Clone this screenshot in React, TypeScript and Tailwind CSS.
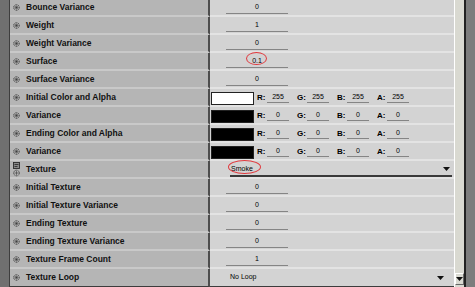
import React from "react";

type Row = {
  label: string;
  kind: "num" | "color" | "select";
  value?: string;
  swatch?: string;
  rgba?: string[];
  mark?: boolean;
  texIcon?: boolean;
};

const rows: Row[] = [
  { label: "Bounce Variance", kind: "num", value: "0" },
  { label: "Weight", kind: "num", value: "1" },
  { label: "Weight Variance", kind: "num", value: "0" },
  { label: "Surface", kind: "num", value: "0.1", mark: true },
  { label: "Surface Variance", kind: "num", value: "0" },
  { label: "Initial Color and Alpha", kind: "color", swatch: "bg-white", rgba: ["255", "255", "255", "255"] },
  { label: "Variance", kind: "color", swatch: "bg-black", rgba: ["0", "0", "0", "0"] },
  { label: "Ending Color and Alpha", kind: "color", swatch: "bg-black", rgba: ["0", "0", "0", "0"] },
  { label: "Variance", kind: "color", swatch: "bg-black", rgba: ["0", "0", "0", "0"] },
  { label: "Texture", kind: "select", value: "Smoke", mark: true, texIcon: true },
  { label: "Initial Texture", kind: "num", value: "0" },
  { label: "Initial Texture Variance", kind: "num", value: "0" },
  { label: "Ending Texture", kind: "num", value: "0" },
  { label: "Ending Texture Variance", kind: "num", value: "0" },
  { label: "Texture Frame Count", kind: "num", value: "1" },
  { label: "Texture Loop", kind: "select", value: "No Loop" },
];

function Gear() {
  return (
    <svg width="7" height="7" viewBox="0 0 7 7" className="shrink-0">
      <circle cx="3.5" cy="3.5" r="2.8" fill="none" stroke="#3a3a3a" strokeWidth="0.9" strokeDasharray="1.2 0.6" />
      <path d="M3.5 1.6v3.8M1.6 3.5h3.8M2.2 2.2l2.6 2.6M4.8 2.2l-2.6 2.6" stroke="#3a3a3a" strokeWidth="0.6" />
    </svg>
  );
}

function TexIcon() {
  return (
    <svg width="7" height="15" viewBox="0 0 7 15" className="shrink-0">
      <rect x="0.5" y="0.5" width="6" height="6" fill="#888" stroke="#2a2a2a" strokeWidth="0.9" />
      <path d="M1.5 2.5h4M1.5 4.5h3" stroke="#222" strokeWidth="0.8" />
      <circle cx="3.5" cy="11" r="2.8" fill="none" stroke="#3a3a3a" strokeWidth="0.9" strokeDasharray="1.2 0.6" />
      <path d="M3.5 9.1v3.8M1.6 11h3.8" stroke="#3a3a3a" strokeWidth="0.6" />
    </svg>
  );
}

function Arrow() {
  return (
    <svg width="7" height="4" viewBox="0 0 7 4">
      <path d="M0 0h7L3.5 4z" fill="#111" />
    </svg>
  );
}

function NumField({ value, mark }: { value: string; mark?: boolean }) {
  return (
    <div className="ml-[16px] mt-[2px] flex h-[13px] w-[62px] items-center justify-center border-b border-[#858585]">
      <span className="relative">
        {value}
        {mark && (
          <span className="absolute left-[-6px] top-[-4px] h-[13px] w-[21px] rounded-[50%] border border-[#e0393e]" />
        )}
      </span>
    </div>
  );
}

function ColorValue({ swatch, rgba }: { swatch: string; rgba: string[] }) {
  const keys = ["R:", "G:", "B:", "A:"];
  return (
    <div className="ml-px mt-[3px] flex items-start">
      <div className={`h-[13px] w-[43px] border border-[#222] ${swatch}`} />
      <div className="ml-[3px] flex gap-[8px]">
        {keys.map((k, i) => (
          <div key={k} className="flex items-start">
            <span className="w-[10px] text-[8px] font-bold leading-[11px]">{k}</span>
            <span className="flex h-[11px] w-[22px] items-center justify-center border-b border-[#858585] leading-[10px]">
              {rgba[i]}
            </span>
          </div>
        ))}
      </div>
    </div>
  );
}

export default function App() {
  return (
    <div
      className="flex h-[287px] w-[475px] overflow-hidden bg-[#7b7b7b] text-[#111]"
      style={{ fontFamily: '"Liberation Sans", Arial, sans-serif' }}
    >
      <div className="w-[10px] shrink-0 border-r border-[#3e3e3e] bg-[#707070]" />

      <div className="-mt-px flex w-[444px] shrink-0 flex-col">
        {rows.map((r, i) => {
          const last = i === rows.length - 1;
          return (
            <div key={i} className="flex h-[18px] shrink-0">
              <div
                className={`flex w-[200px] shrink-0 items-center gap-[6px] border-r-2 border-r-[#4d4d4d] bg-[#b5b5b5] pl-[3px] ${
                  last ? "border-b border-b-[#3c3c3c]" : "border-b-2 border-b-[#c9c9c9]"
                }`}
              >
                {r.texIcon ? <TexIcon /> : <Gear />}
                <span className="text-[8.5px] font-bold leading-none">{r.label}</span>
              </div>
              <div
                className={`flex-1 bg-[#d3d3d3] text-[7px] text-black ${
                  last ? "border-b border-b-[#3c3c3c]" : "border-b-2 border-b-[#e3e3e3]"
                }`}
              >
                {r.kind === "num" && <NumField value={r.value!} mark={r.mark} />}
                {r.kind === "color" && <ColorValue swatch={r.swatch!} rgba={r.rgba!} />}
                {r.kind === "select" && !last && (
                  <div className="ml-[20px] mt-[2px] flex h-[14px] w-[222px] items-center justify-between border-b-2 border-[#3a3a3a] pl-px pr-[2px]">
                    <span className="relative">
                      {r.value}
                      {r.mark && (
                        <span className="absolute left-[-3px] top-[-4px] h-[14px] w-[33px] rounded-[50%] border border-[#e0393e]" />
                      )}
                    </span>
                    <Arrow />
                  </div>
                )}
                {r.kind === "select" && last && (
                  <div className="ml-[20px] flex h-[17px] items-center justify-between pr-[10px]">
                    <span>{r.value}</span>
                    <Arrow />
                  </div>
                )}
              </div>
            </div>
          );
        })}
      </div>

      <div className="flex w-[10px] shrink-0 flex-col border-l border-white bg-[#d9d9d1]">
        <div className="flex-1" />
        <div className="mb-[2px] flex h-[12px] items-center justify-center border border-b-[#666] border-l-white border-r-[#666] border-t-white">
          <Arrow />
        </div>
      </div>
      <div className="w-[2px] shrink-0 bg-[#222]" />
      <div className="flex-1 bg-[#7d7d7d]" />
    </div>
  );
}
